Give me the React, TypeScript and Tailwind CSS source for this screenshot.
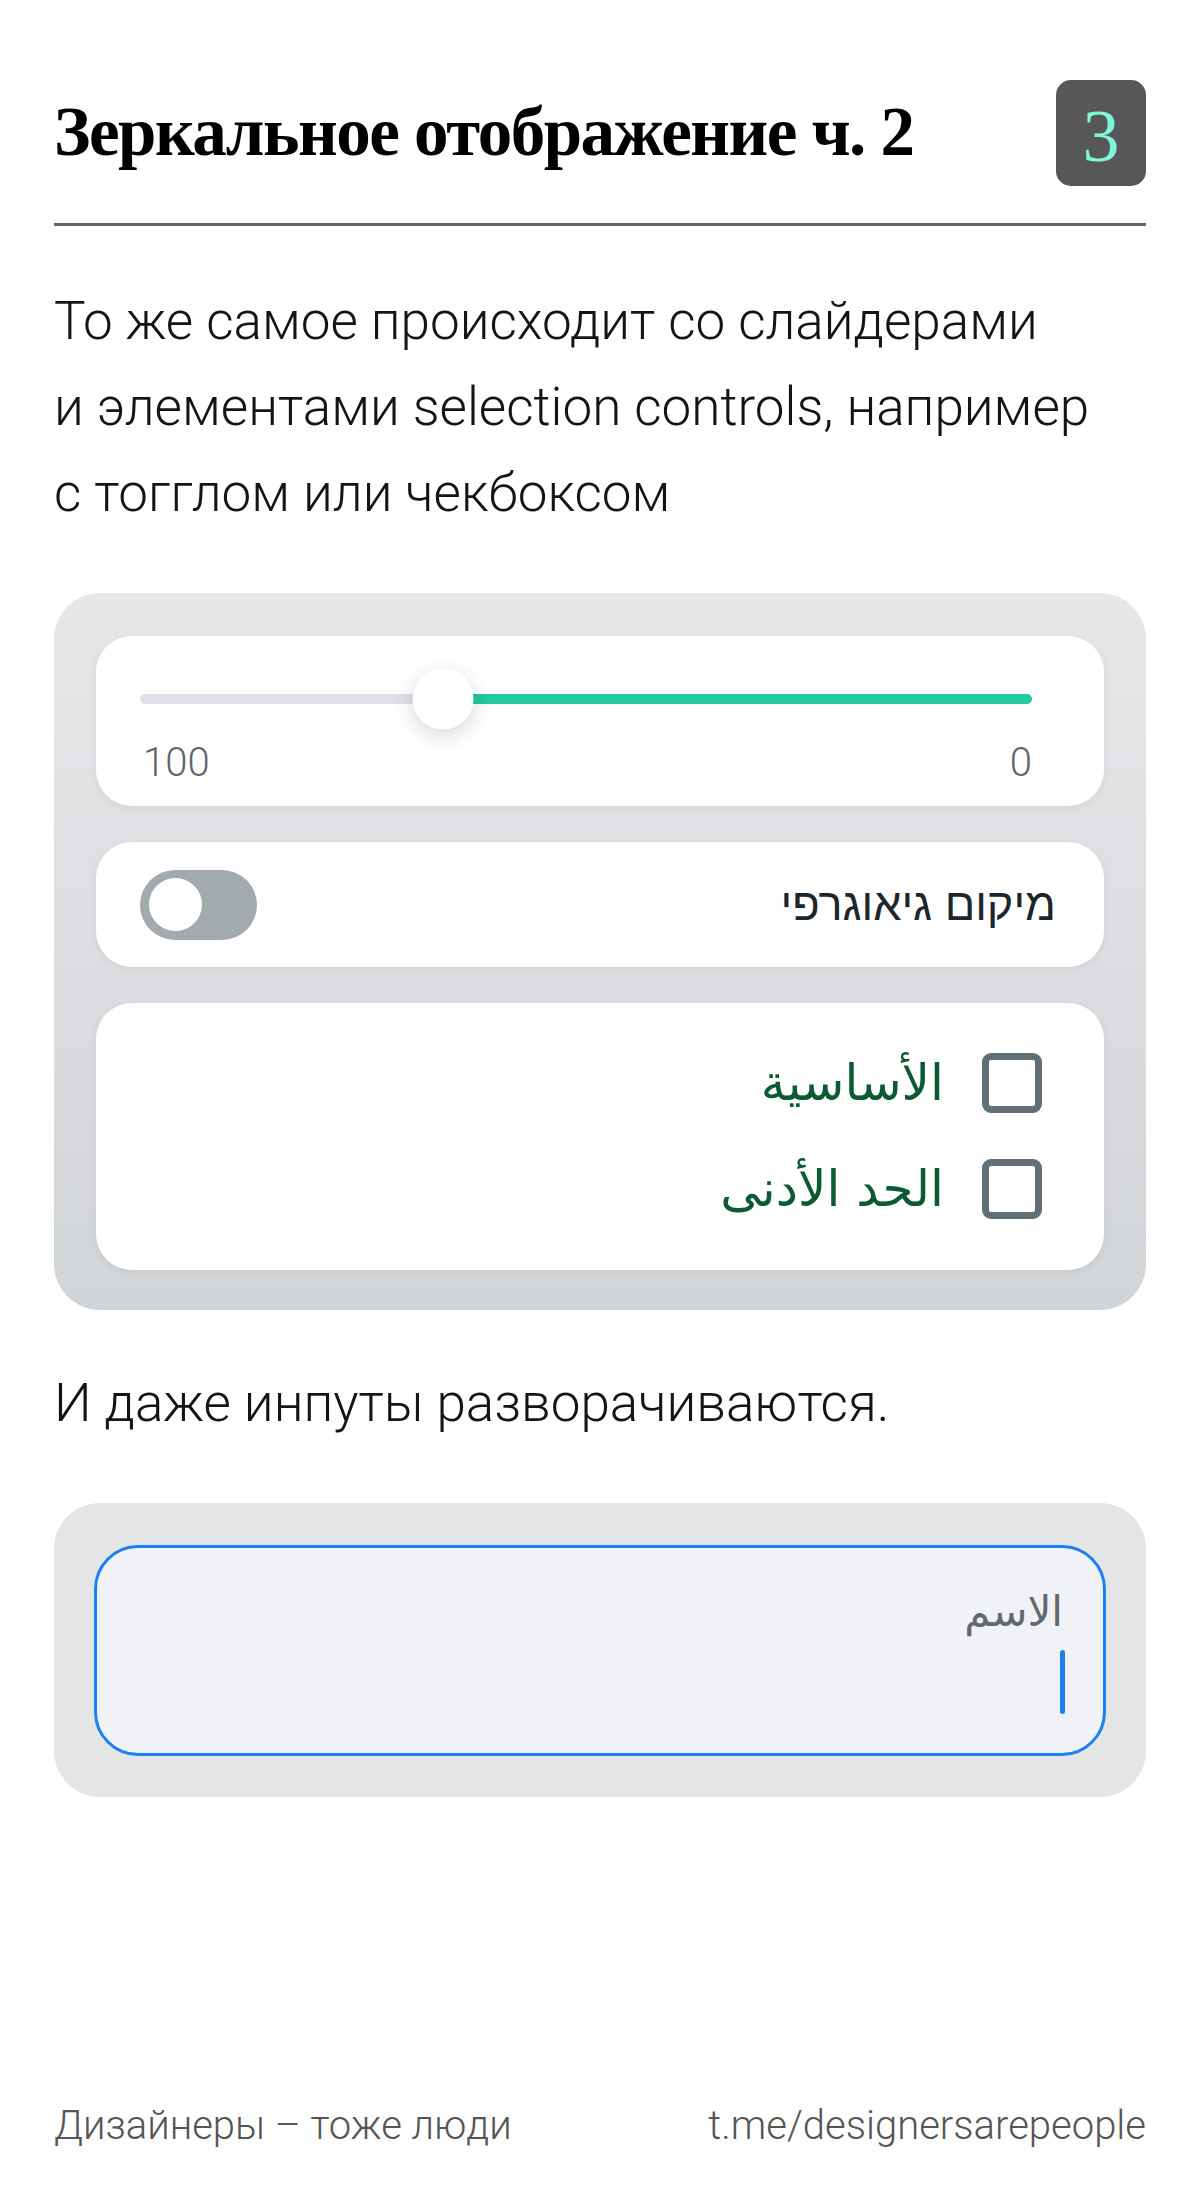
import React from 'react';

const sans = "font-['Roboto','Liberation_Sans',sans-serif]";

const SliderCard: React.FC = () => (
  <div className="h-[170px] rounded-[36px] bg-white pl-[44px] pr-[72px] pt-[58px] shadow-[0_2px_10px_rgba(0,0,0,0.06)]">
    <div className="relative h-[10px]">
      <div className="absolute inset-y-0 left-0 w-[34%] rounded-l-full bg-[#dde0e7]" />
      <div className="absolute inset-y-0 right-0 left-[34%] rounded-r-full bg-[#22c9a1]" />
      <div className="absolute left-[34%] top-1/2 h-[61px] w-[61px] -translate-x-1/2 -translate-y-1/2 rounded-full bg-white shadow-[0_6px_22px_rgba(0,0,0,0.16)]" />
    </div>
    <div className={`mt-[36px] flex justify-between pl-[3px] text-[40px] font-light leading-[46px] text-[#5e656b] ${sans}`}>
      <span>100</span>
      <span>0</span>
    </div>
  </div>
);

const ToggleCard: React.FC = () => (
  <div className="flex h-[125px] items-center justify-between rounded-[36px] bg-white pl-[44px] pr-[48px] shadow-[0_2px_10px_rgba(0,0,0,0.06)]">
    <div className="flex h-[70px] w-[117px] items-center rounded-full bg-[#a2aaae] pl-[9px]">
      <div className="h-[53px] w-[53px] rounded-full bg-white" />
    </div>
    <span dir="rtl" className="font-['Liberation_Sans',sans-serif] text-[45px] text-[#1c262c]">
      מיקום גיאוגרפי
    </span>
  </div>
);

const CheckRow: React.FC<{ label: string }> = ({ label }) => (
  <div className="flex items-center justify-end gap-[38px]">
    <span dir="rtl" className="font-['DejaVu_Sans',sans-serif] text-[50px] leading-[60px] text-[#0b5a32]">
      {label}
    </span>
    <div className="h-[60px] w-[60px] rounded-[9px] border-[7px] border-[#636f76] bg-white" />
  </div>
);

const CheckboxCard: React.FC = () => (
  <div className="flex h-[267px] flex-col gap-[46px] rounded-[36px] bg-white pr-[62px] pt-[50px] shadow-[0_2px_10px_rgba(0,0,0,0.06)]">
    <CheckRow label="الأساسية" />
    <CheckRow label="الحد الأدنى" />
  </div>
);

export default function App() {
  return (
    <div className="flex min-h-[2200px] flex-col bg-white px-[54px] pt-[80px] pb-[49px]">
      <div className="flex items-center justify-between">
        <h1 className="font-['Liberation_Serif',serif] text-[69px] font-bold tracking-[-1.5px] text-black">
          Зеркальное отображение ч. 2
        </h1>
        <div className="flex h-[106px] w-[90px] items-center justify-center rounded-[15px] bg-[#575757] pt-[6px] font-['Liberation_Serif',serif] text-[74px] text-[#7ff6d6]">
          3
        </div>
      </div>
      <div className="mt-[37px] h-[3px] bg-[#666666]" />

      <p className={`mt-[52px] text-[53px] font-light leading-[86px] text-[#141414] ${sans}`}>
        То же самое происходит со слайдерами
        <br />и элементами selection controls, например
        <br />с тогглом или чекбоксом
      </p>

      <div className="mt-[57px] flex flex-col gap-[36px] rounded-[46px] bg-gradient-to-b from-[#e6e7e9] to-[#d2d5d8] px-[42px] pt-[43px] pb-[40px]">
        <SliderCard />
        <ToggleCard />
        <CheckboxCard />
      </div>

      <p className={`mt-[50px] text-[53px] font-light leading-[86px] text-[#141414] ${sans}`}>
        И даже инпуты разворачиваются.
      </p>

      <div className="mt-[57px] rounded-[46px] bg-[#e4e5e7] px-[40px] pt-[42px] pb-[41px]">
        <div className="flex h-[211px] flex-col items-end rounded-[44px] border-[3px] border-[#1b80f1] bg-[#f0f2f5] pr-[40px] pt-[36px]">
          <span dir="rtl" className="font-['DejaVu_Sans',sans-serif] text-[42px] leading-[56px] text-[#606970]">
            الاسم
          </span>
          <div className="mt-[10px] mr-[-2px] h-[64px] w-[5px] rounded-full bg-[#1b80f1]" />
        </div>
      </div>

      <div className={`mt-auto flex items-center justify-between text-[40px] font-light leading-[50px] text-[#555555] ${sans}`}>
        <span>Дизайнеры – тоже люди</span>
        <span>t.me/designersarepeople</span>
      </div>
    </div>
  );
}
